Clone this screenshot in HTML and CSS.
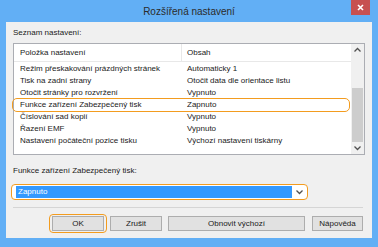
FILE: index.html
```html
<!DOCTYPE html>
<html>
<head>
<meta charset="utf-8">
<link rel="stylesheet" href="styles.css">
</head>
<body>
<div class="window">
  <div class="titlebar">
    <span></span>
    <span class="title">Rozšířená nastavení</span>
    <div class="close"><svg width="7" height="7" viewBox="0 0 7 7"><path d="M1 1L6 6M6 1L1 6" stroke="#fff" stroke-width="1.6"/></svg></div>
  </div>
  <div class="client">
    <div class="label">Seznam nastavení:</div>
    <div class="list">
      <div class="list-main">
        <div class="header"><span class="c1">Položka nastavení</span><span class="c2">Obsah</span></div>
        <div class="row first"><span class="c1">Režim přeskakování prázdných stránek</span><span class="c2">Automaticky 1</span></div>
        <div class="row"><span class="c1">Tisk na zadní strany</span><span class="c2">Otočit data dle orientace listu</span></div>
        <div class="row"><span class="c1">Otočit stránky pro rozvržení</span><span class="c2">Vypnuto</span></div>
        <div class="row hl"><span class="c1">Funkce zařízení Zabezpečený tisk</span><span class="c2">Zapnuto</span></div>
        <div class="row"><span class="c1">Číslování sad kopií</span><span class="c2">Vypnuto</span></div>
        <div class="row"><span class="c1">Řazení EMF</span><span class="c2">Vypnuto</span></div>
        <div class="row"><span class="c1">Nastavení počáteční pozice tisku</span><span class="c2">Výchozí nastavení tiskárny</span></div>
      </div>
      <div class="scrollbar">
        <div class="sb-up"><svg width="9" height="6" viewBox="0 0 9 6"><path d="M1.5 4.5L4.5 1.5L7.5 4.5" fill="none" stroke="#505050" stroke-width="1.3"/></svg></div>
        <div class="sb-track"><div class="sb-thumb"></div></div>
        <div class="sb-down"><svg width="9" height="6" viewBox="0 0 9 6"><path d="M1.5 1.5L4.5 4.5L7.5 1.5" fill="none" stroke="#505050" stroke-width="1.3"/></svg></div>
      </div>
    </div>
    <div class="label label2">Funkce zařízení Zabezpečený tisk:</div>
    <div class="combo">
      <div class="sel">Zapnuto</div>
      <div class="arrow"><svg width="9" height="6" viewBox="0 0 9 6"><path d="M1.5 1.5L4.5 4.5L7.5 1.5" fill="none" stroke="#505050" stroke-width="1.3"/></svg></div>
    </div>
    <div class="sep"></div>
    <div class="buttons">
      <div class="btn ok">OK</div>
      <div class="btn">Zrušit</div>
      <div class="btn wide">Obnovit výchozí</div>
      <div class="btn help">Nápověda</div>
    </div>
  </div>
</div>
</body>
</html>
```

FILE: styles.css
```css
* { box-sizing: border-box; }
html, body { margin: 0; padding: 0; }
body {
  width: 378px;
  height: 247px;
  overflow: hidden;
  font-family: "Liberation Sans", Arial, sans-serif;
  font-size: 8px;
  color: #1a1a1a;
}
.window {
  width: 378px;
  height: 247px;
  background: #62aff5;
  display: flex;
  flex-direction: column;
}
.titlebar {
  height: 22px;
  display: grid;
  grid-template-columns: 1fr auto 1fr;
  align-items: start;
}
.title {
  font-size: 10px;
  line-height: 12px;
  margin-top: 6px;
  color: #2b2b2b;
}
.close {
  justify-self: end;
  margin-right: 8px;
  width: 19px;
  height: 15px;
  background: #c75050;
  display: flex;
  align-items: center;
  justify-content: center;
}
.client {
  margin: 0 6px;
  height: 216px;
  background: #f0f0f0;
  padding: 5px 7px 0 7px;
  display: flex;
  flex-direction: column;
}
.label {
  line-height: 11px;
  height: 11px;
}
.list {
  margin-top: 5px;
  height: 112px;
  border: 1px solid #abadb3;
  background: #fff;
  display: flex;
}
.list-main {
  flex: 1;
}
.header, .row {
  display: grid;
  grid-template-columns: 167px 1fr;
  white-space: nowrap;
}
.header {
  height: 18px;
  line-height: 17px;
  border-bottom: 1px solid #e8e8e8;
}
.header .c2 { border-left: 1px solid #e8e8e8; padding-left: 5px; }
.c1, .c2 { padding-left: 6px; }
.row {
  height: 12px;
  line-height: 12px;
}
.row.first { margin-top: 1px; }
.row.hl { position: relative; }
.row.hl::after {
  content: "";
  position: absolute;
  left: -2px;
  right: 1px;
  top: -1px;
  bottom: -1px;
  border: 1.5px solid #f39c1f;
  border-radius: 5px;
}
.scrollbar {
  width: 13px;
  background: #f0f0f0;
  display: flex;
  flex-direction: column;
}
.sb-up, .sb-down {
  height: 12px;
  display: flex;
  align-items: center;
  justify-content: center;
}
.sb-track { flex: 1; padding: 0 1px; }
.sb-thumb {
  margin-top: 32px;
  height: 54px;
  background: #cdcdcd;
}
.label2 { margin-top: 10px; }
.combo {
  margin-top: 8px;
  margin-left: -2px;
  width: 297px;
  height: 16px;
  border: 1.5px solid #f39c1f;
  border-radius: 4px;
  background: #fff;
  display: flex;
  padding: 1px 1px 1px 4px;
}
.sel {
  flex: 1;
  background: #3399ff;
  color: #fff;
  line-height: 11px;
  padding-left: 2px;
}
.arrow {
  width: 14px;
  display: flex;
  align-items: center;
  justify-content: center;
}
.sep {
  margin-top: 7px;
  height: 1px;
  width: 350px;
  background: #d5d5d5;
}
.buttons {
  margin-top: 8px;
  display: flex;
  gap: 6px;
  padding-left: 39px;
}
.btn {
  height: 15px;
  width: 52px;
  background: #e1e1e1;
  border: 1px solid #adadad;
  text-align: center;
  line-height: 13px;
}
.btn.wide { width: 137px; }
.btn.help { width: 51px; margin-left: 1px; }
.btn.ok { position: relative; }
.btn.ok::after {
  content: "";
  position: absolute;
  left: -4px;
  right: -4px;
  top: -3px;
  bottom: -3px;
  border: 1.5px solid #f39c1f;
  border-radius: 4px;
}
```
